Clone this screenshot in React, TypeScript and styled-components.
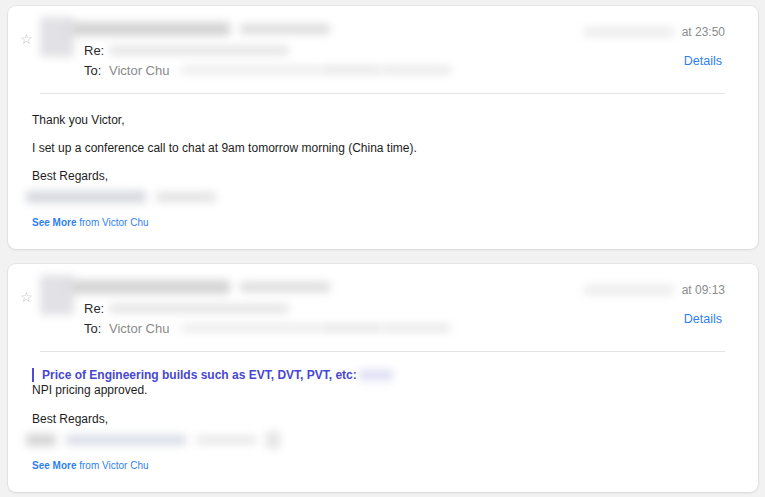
import React from "react";
import styled, { createGlobalStyle } from "styled-components";

const Global = createGlobalStyle`
  html, body { margin: 0; padding: 0; background: #f2f2f2; }
  body { font-family: "Liberation Sans", Arial, Helvetica, sans-serif; color: #1d1d1d; }
`;

const Page = styled.div`
  display: flex;
  flex-direction: column;
  gap: 15px;
  padding: 6px 7px 6px 8px;
`;

const Card = styled.div`
  background: #fff;
  border-radius: 8px;
  box-shadow: 0 0 0 1px rgba(0,0,0,0.04), 0 1px 3px rgba(0,0,0,0.08);
  padding-bottom: 19px;
`;

const Header = styled.div`
  display: flex;
  align-items: flex-start;
  padding: 11px 36px 0 12px;
  height: 76px;
  box-sizing: content-box;
`;

const Star = styled.div`
  width: 20px;
  margin-top: 14px;
  color: #b9b9b9;
  font-size: 14px;
  line-height: 16px;
  font-family: "DejaVu Sans", sans-serif;
`;

const Blur = styled.span<{ $w: number; $h: number; $tone?: string }>`
  display: inline-block;
  width: ${p => p.$w}px;
  height: ${p => p.$h}px;
  background: ${p => p.$tone || "#d9d9d9"};
  filter: blur(4px);
  border-radius: 3px;
  vertical-align: middle;
  flex: none;
`;

const Avatar = styled(Blur)`
  margin-top: 0;
`;

const Main = styled.div`
  flex: 1;
  display: flex;
  flex-direction: column;
  margin-left: -4px;
`;

const NameRow = styled.div`
  display: flex;
  align-items: center;
  gap: 10px;
  height: 24px;
`;

const Line = styled.div`
  display: flex;
  align-items: center;
  height: 18px;
  margin-left: 14px;
  font-size: 13px;
  & + & { margin-top: 2px; }
`;

const Label = styled.span`
  color: #2a2a2a;
  width: 25px;
`;

const Recipient = styled.span`
  color: #8a8a8a;
  margin-right: 12px;
`;

const Right = styled.div`
  display: flex;
  flex-direction: column;
  align-items: flex-end;
  margin-top: 7px;
`;

const Time = styled.div`
  display: flex;
  align-items: center;
  gap: 8px;
  margin-right: -3px;
  font-size: 12px;
  line-height: 16px;
  color: #8c8c8c;
`;

const DetailsLink = styled.a`
  margin-top: 13px;
  font-size: 12.5px;
  line-height: 16px;
  color: #2f7ff0;
  text-decoration: none;
`;

const Divider = styled.hr`
  border: 0;
  border-top: 1px solid #e3e3e3;
  margin: 0 33px 0 32px;
`;

const Body = styled.div`
  padding: 18px 24px 0 24px;
  font-size: 12px;
`;

const P = styled.p<{ $gap?: number }>`
  margin: 0 0 ${p => (p.$gap ?? 12)}px 0;
  line-height: 16px;
`;

const Quote = styled.div`
  display: flex;
  align-items: center;
  border-left: 2px solid #4d4ddb;
  padding-left: 8px;
  height: 14px;
  margin-top: -2px;
  font-weight: bold;
  color: #4747d2;
  font-size: 12px;
  gap: 2px;
`;

const Signature = styled.div`
  display: flex;
  gap: 10px;
  align-items: center;
  height: 25px;
  margin-left: -6px;
`;

const SeeMore = styled.div`
  margin-top: 7px;
  font-size: 10px;
  line-height: 14px;
  color: #2f7ff0;
  b { font-weight: bold; }
`;

type MailProps = {
  time: string;
  children: React.ReactNode;
};

function Mail({ time, children }: MailProps) {
  return (
    <Card>
      <Header>
        <Star>☆</Star>
        <Avatar $w={34} $h={40} $tone="#e2e2e6" />
        <Main>
          <NameRow>
            <Blur $w={160} $h={14} $tone="#d4d4d4" />
            <Blur $w={90} $h={10} $tone="#dcdcdc" />
          </NameRow>
          <Line>
            <Label>Re:</Label>
            <Blur $w={180} $h={9} $tone="#e4e4e4" />
          </Line>
          <Line>
            <Label>To:</Label>
            <Recipient>Victor Chu</Recipient>
            <Blur $w={140} $h={8} $tone="#ebebeb" />
            <Blur $w={60} $h={8} $tone="#e6e6e6" />
            <Blur $w={70} $h={8} $tone="#e8e8e8" />
          </Line>
        </Main>
        <Right>
          <Time>
            <Blur $w={90} $h={10} $tone="#ececec" />
            {time}
          </Time>
          <DetailsLink href="#">Details</DetailsLink>
        </Right>
      </Header>
      <Divider />
      <Body>
        {children}
        <SeeMore>
          <b>See More</b> from Victor Chu
        </SeeMore>
      </Body>
    </Card>
  );
}

export default function App() {
  return (
    <>
      <Global />
      <Page>
        <Mail time="at 23:50">
          <P>Thank you Victor,</P>
          <P>I set up a conference call to chat at 9am tomorrow morning (China time).</P>
          <P $gap={0}>Best Regards,</P>
          <Signature>
            <Blur $w={120} $h={12} $tone="#d6d8de" />
            <Blur $w={60} $h={10} $tone="#e2e2e2" />
          </Signature>
        </Mail>
        <Mail time="at 09:13">
          <Quote>
            Price of Engineering builds such as EVT, DVT, PVT, etc:
            <Blur $w={34} $h={10} $tone="#dcdcf4" />
          </Quote>
          <P $gap={13}>NPI pricing approved.</P>
          <P $gap={0}>Best Regards,</P>
          <Signature>
            <Blur $w={30} $h={12} $tone="#d4d4d4" />
            <Blur $w={120} $h={10} $tone="#d8dce6" />
            <Blur $w={60} $h={8} $tone="#e6e6e6" />
            <Blur $w={14} $h={18} $tone="#e6e6e6" />
          </Signature>
        </Mail>
      </Page>
    </>
  );
}
